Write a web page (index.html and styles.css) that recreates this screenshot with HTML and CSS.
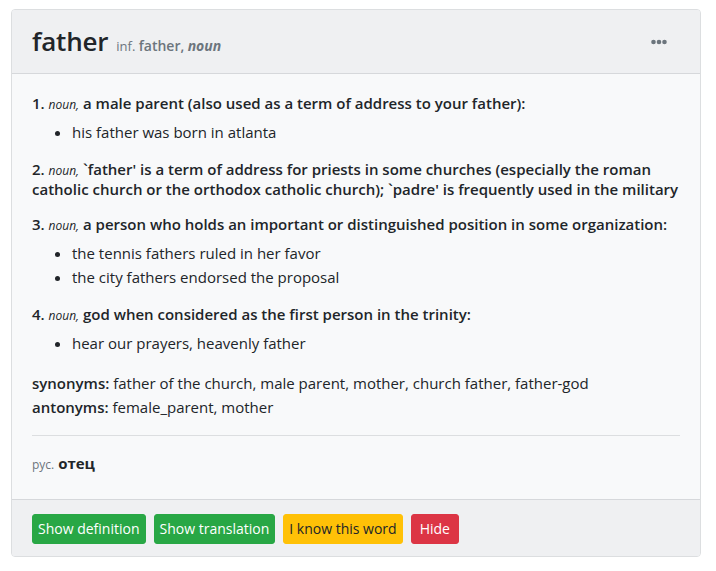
FILE: index.html
```html
<!DOCTYPE html>
<html>
<head>
<meta charset="utf-8">
<link rel="stylesheet" href="styles.css">
</head>
<body>
<div class="card">
  <div class="card-header">
    <div class="title">
      <span class="word">father</span>
      <span class="inf">inf. <span class="inf-word">father,</span> <span class="inf-pos">noun</span></span>
    </div>
    <button class="dots" aria-label="more">
      <svg width="16" height="6" viewBox="0 0 16 6"><circle cx="2.5" cy="3" r="2.3" fill="#6c757d"/><circle cx="8" cy="3" r="2.3" fill="#6c757d"/><circle cx="13.5" cy="3" r="2.3" fill="#6c757d"/></svg>
    </button>
  </div>
  <div class="card-body">
    <div class="meaning">
      <div class="def"><span class="num">1.</span> <span class="pos">noun,</span> a male parent (also used as a term of address to your father):</div>
      <ul class="examples">
        <li>his father was born in atlanta</li>
      </ul>
    </div>
    <div class="meaning">
      <div class="def"><span class="num">2.</span> <span class="pos">noun,</span> `father' is a term of address for priests in some churches (especially the roman catholic church or the orthodox catholic church); `padre' is frequently used in the military</div>
    </div>
    <div class="meaning">
      <div class="def"><span class="num">3.</span> <span class="pos">noun,</span> a person who holds an important or distinguished position in some organization:</div>
      <ul class="examples">
        <li>the tennis fathers ruled in her favor</li>
        <li>the city fathers endorsed the proposal</li>
      </ul>
    </div>
    <div class="meaning">
      <div class="def"><span class="num">4.</span> <span class="pos">noun,</span> god when considered as the first person in the trinity:</div>
      <ul class="examples">
        <li>hear our prayers, heavenly father</li>
      </ul>
    </div>
    <div class="relations">
      <div><span class="label">synonyms:</span> father of the church, male parent, mother, church father, father-god</div>
      <div><span class="label">antonyms:</span> female_parent, mother</div>
    </div>
    <hr class="sep">
    <div class="translation"><span class="lang">рус.</span> <span class="tr">отец</span></div>
  </div>
  <div class="card-footer">
    <button class="btn btn-green">Show definition</button>
    <button class="btn btn-green">Show translation</button>
    <button class="btn btn-yellow">I know this word</button>
    <button class="btn btn-red">Hide</button>
  </div>
</div>
</body>
</html>
```

FILE: styles.css
```css
* { box-sizing: border-box; }
body {
  margin: 0;
  padding: 9px 15px 0 11px;
  background: #ffffff;
  font-family: "Open Sans", "Noto Sans", sans-serif;
  color: #212529;
  font-size: 15px;
}
.card {
  border: 1px solid #dcdee0;
  border-radius: 4px;
  background: #f8f9fa;
  overflow: hidden;
}
.card-header {
  height: 64px;
  background: #eff0f2;
  border-bottom: 1px solid #d6d8db;
  display: flex;
  align-items: center;
  justify-content: space-between;
  padding: 0 33px 0 20px;
}
.title { display: flex; align-items: baseline; gap: 8px; padding-bottom: 2px; }
.word { font-size: 26px; font-weight: 600; color: #212529; letter-spacing: -0.2px; }
.inf { font-size: 13px; color: #6c757d; }
.inf-word { font-size: 14px; font-weight: 600; }
.inf-pos { font-size: 14px; font-weight: 700; font-style: italic; }
.dots {
  border: 0; background: transparent; padding: 0; margin: 0;
  display: flex; align-items: center; height: 10px;
}
.card-body { padding: 20px 20px 22px 20px; }
.meaning { margin-bottom: 16px; }
.def { font-size: 15px; font-weight: 600; line-height: 19px; }
.pos { font-style: italic; font-weight: 400; font-size: 12px; }
.examples { margin: 6px 0 0 0; padding-left: 40px; font-size: 15px; line-height: 24px; }
.relations { margin-top: 17px; line-height: 24px; font-size: 15px; }
.meaning + .relations { margin-top: 1px; }
.label { font-weight: 600; }
.sep { border: 0; border-top: 1px solid #dcdee0; margin: 16px 0 15px 0; }
.translation { font-size: 15px; line-height: 24px; }
.lang { color: #6c757d; font-size: 12px; }
.tr { font-weight: 700; }
.card-footer {
  background: #eff0f2;
  border-top: 1px solid #d6d8db;
  padding: 14px 20px 12px 20px;
  display: flex;
  gap: 8px;
}
.btn {
  font-family: inherit;
  font-size: 14px;
  line-height: 20px;
  padding: 4px 5px;
  border: 1px solid transparent;
  border-radius: 3px;
  color: #fff;
}
.btn-green { background: #28a745; border-color: #28a745; }
.btn-yellow { background: #ffc107; border-color: #ffc107; color: #212529; }
.btn-red { background: #dc3545; border-color: #dc3545; padding: 4px 8px; }
```
